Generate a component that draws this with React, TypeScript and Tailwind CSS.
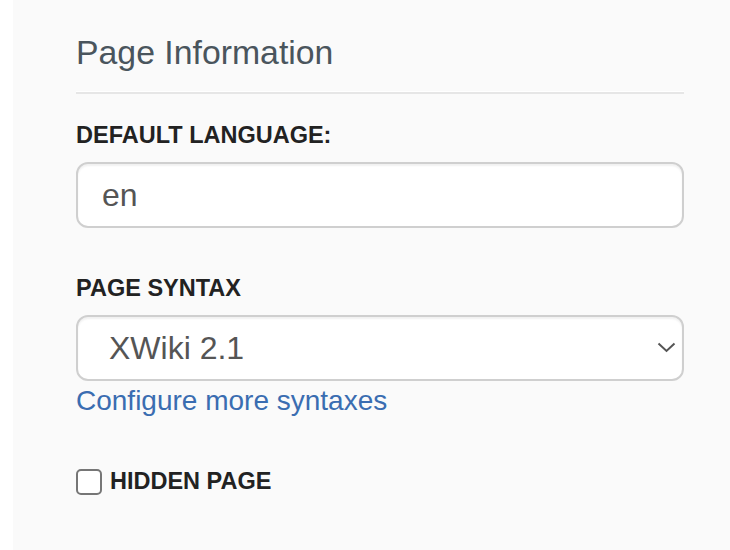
const font = { fontFamily: '"Liberation Sans", Arial, sans-serif' };

function FieldLabel({ children, className = "" }: { children: string; className?: string }) {
  return (
    <div className={`text-[23.5px] font-bold leading-none text-[#222222] ${className}`}>
      {children}
    </div>
  );
}

export default function App() {
  return (
    <div className="flex h-[550px] w-full bg-white pl-[13px]" style={font}>
      <div className="flex flex-1 flex-col bg-[#fafafa] pl-[63px] pr-[46px] pt-[36px]">
        <h2 className="text-[33.8px] leading-none text-[#4a555d]">Page Information</h2>
        <div className="mt-[21px] h-px bg-white" />
        <div className="h-[2px] bg-[#e6e6e6]" />

        <FieldLabel className="mt-[30px]">DEFAULT LANGUAGE:</FieldLabel>
        <div className="mt-[15px] flex h-[66px] items-center rounded-xl border-2 border-[#cfcfcf] bg-white pl-[24px] shadow-[inset_0_2px_2px_rgba(0,0,0,0.06)]">
          <span className="text-[32px] leading-none text-[#555555]">en</span>
        </div>

        <FieldLabel className="mt-[49px]">PAGE SYNTAX</FieldLabel>
        <div className="mt-[14px] flex h-[66px] items-center justify-between rounded-xl border-2 border-[#cfcfcf] bg-white pl-[31px] pr-[6px] shadow-[inset_0_2px_2px_rgba(0,0,0,0.06)]">
          <span className="text-[32px] leading-none text-[#555555]">XWiki 2.1</span>
          <svg width="19" height="11" viewBox="0 0 19 11" fill="none">
            <polyline points="1.5,1.5 9.5,9 17.5,1.5" stroke="#555555" strokeWidth="2" />
          </svg>
        </div>
        <a className="mt-[6px] text-[28px] leading-none text-[#3a6db1]">Configure more syntaxes</a>

        <div className="mt-[54px] flex items-center gap-[8px]">
          <div className="h-[26px] w-[26px] rounded-[5px] border-2 border-[#767676] bg-white" />
          <FieldLabel>HIDDEN PAGE</FieldLabel>
        </div>
      </div>
    </div>
  );
}
